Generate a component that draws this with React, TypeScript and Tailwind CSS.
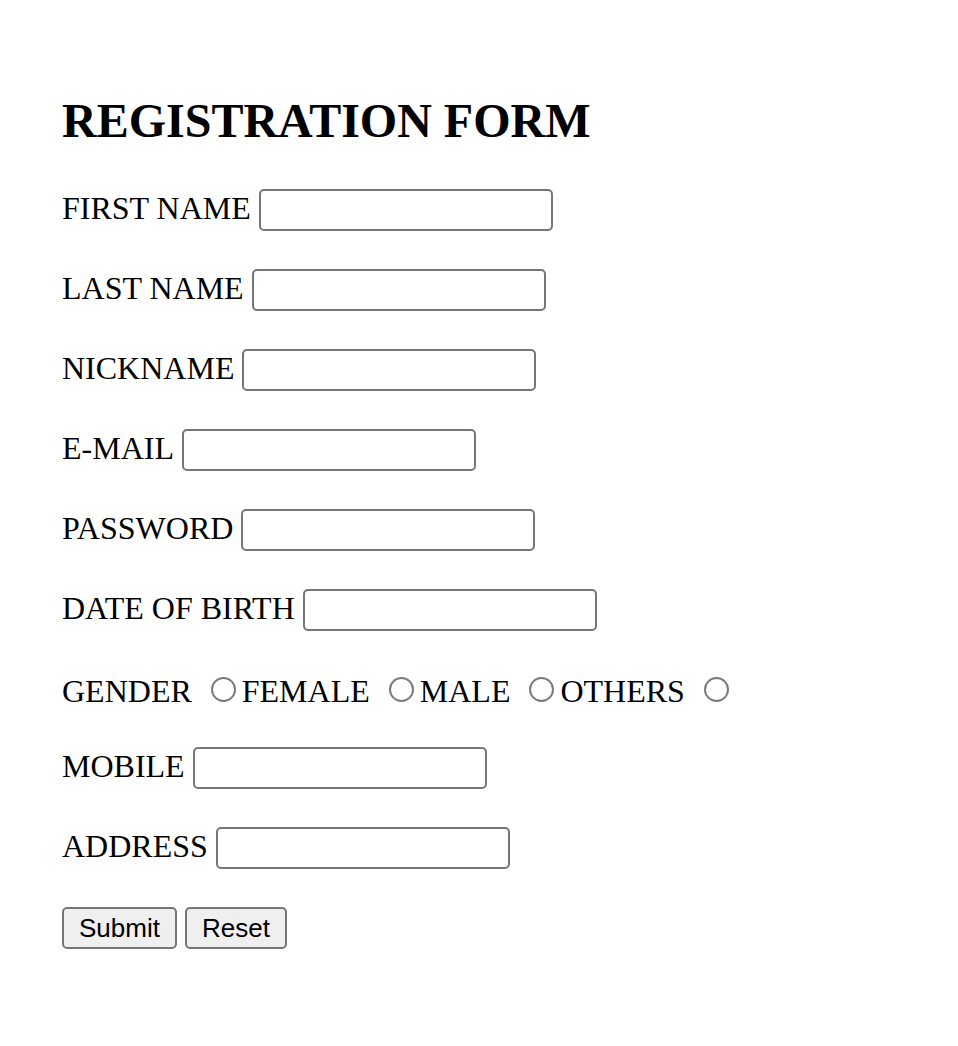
import React from "react";

const serif = { fontFamily: '"Liberation Serif", "Times New Roman", serif' };

function Field({ label, mt }: { label: string; mt: string }) {
  return (
    <div className={`flex items-start gap-[8px] h-[42px] ${mt}`}>
      <span className="text-[32px] leading-[38px] text-black whitespace-nowrap">{label}</span>
      <input
        type="text"
        className="w-[294px] h-[42px] border-2 border-[#767676] rounded-[5px] bg-white outline-none"
      />
    </div>
  );
}

function Radio() {
  return (
    <span className="inline-block w-[25px] h-[25px] rounded-full border-2 border-[#7a7a7a] bg-white ml-[19px] mr-[6px] shrink-0" />
  );
}

export default function App() {
  return (
    <div className="min-h-[1046px] w-full bg-white text-black" style={serif}>
      <div className="flex flex-col pl-[62px] pt-[93px]">
        <h2 className="text-[48px] leading-[56px] font-bold whitespace-nowrap">REGISTRATION FORM</h2>
        <Field label="FIRST NAME" mt="mt-[40px]" />
        <Field label="LAST NAME" mt="mt-[38px]" />
        <Field label="NICKNAME" mt="mt-[38px]" />
        <Field label="E-MAIL" mt="mt-[38px]" />
        <Field label="PASSWORD" mt="mt-[38px]" />
        <Field label="DATE OF BIRTH" mt="mt-[38px]" />
        <div className="flex items-baseline h-[36px] mt-[42px] text-[32px] leading-[36px] whitespace-nowrap">
          <span>GENDER</span>
          <Radio />
          <span>FEMALE</span>
          <Radio />
          <span>MALE</span>
          <Radio />
          <span>OTHERS</span>
          <Radio />
        </div>
        <Field label="MOBILE" mt="mt-[38px]" />
        <Field label="ADDRESS" mt="mt-[38px]" />
        <div
          className="flex gap-[8px] mt-[38px]"
          style={{ fontFamily: '"Liberation Sans", Arial, sans-serif' }}
        >
          <button className="w-[115px] h-[42px] text-[26px] leading-none border-2 border-[#767676] rounded-[5px] bg-[#efefef] text-black flex items-center justify-center">
            Submit
          </button>
          <button className="w-[102px] h-[42px] text-[26px] leading-none border-2 border-[#767676] rounded-[5px] bg-[#efefef] text-black flex items-center justify-center">
            Reset
          </button>
        </div>
      </div>
    </div>
  );
}
